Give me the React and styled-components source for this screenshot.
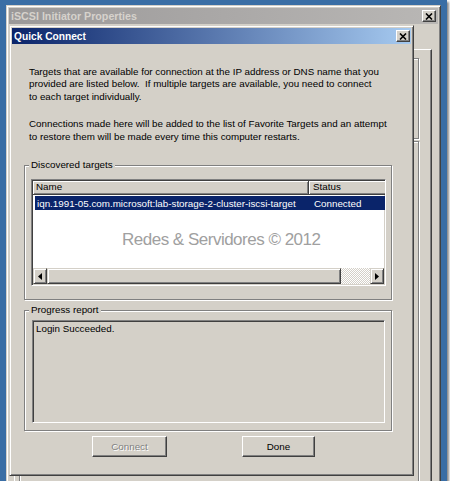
import React from 'react';
import styled, { createGlobalStyle } from 'styled-components';

const FACE = '#d4d0c8';

const GlobalStyle = createGlobalStyle`
  html, body {
    margin: 0;
    padding: 0;
    background: #fff;
  }
  body {
    font-family: "Liberation Sans", Arial, sans-serif;
    font-size: 9.8px;
    color: #000;
  }
`;

const Desktop = styled.div`
  position: relative;
  width: 447px;
  height: 481px;
  background: #3a6ea5;
  overflow: hidden;
  box-shadow: 2px 2px 2px rgba(0, 0, 0, 0.45);
`;

// windows sit on the desktop canvas, so they get coordinates
const Window = styled.div`
  position: absolute;
  left: ${p => p.$x}px;
  top: ${p => p.$y}px;
  width: ${p => p.$w}px;
  height: ${p => p.$h}px;
  box-sizing: border-box;
  display: flex;
  flex-direction: column;
  padding: 2px;
  background: ${FACE};
  border: 1px solid;
  border-color: ${FACE} #404040 #404040 ${FACE};
  box-shadow: inset 1px 1px #fff, inset -1px -1px #808080;
`;

const TitleBar = styled.div`
  flex: none;
  height: 16px;
  display: flex;
  align-items: center;
  padding: 0 ${p => (p.$active ? 1 : 2)}px 0 2px;
  background: ${p => (p.$active
    ? 'linear-gradient(to right, #0a246a, #a6caf0)'
    : 'linear-gradient(to right, #9b9999, #b9b7b5)')};
  color: ${p => (p.$active ? '#fff' : '#d6d2cc')};
  font-weight: bold;
  font-size: ${p => (p.$active ? 10.2 : 10.7)}px;
  white-space: nowrap;
`;

const TitleText = styled.span`
  flex: 1;
`;

const CaptionButton = styled.div`
  width: 14px;
  height: 12px;
  box-sizing: border-box;
  display: flex;
  align-items: center;
  justify-content: center;
  background: ${FACE};
  border: 1px solid;
  border-color: #fff #404040 #404040 #fff;
  box-shadow: inset -1px -1px #808080;
`;

const CloseGlyph = () => (
  <svg width="8" height="7" viewBox="0 0 8 7">
    <path d="M1 0.5 L7 6.5 M7 0.5 L1 6.5" stroke="#000" strokeWidth="1.6" />
  </svg>
);

/* ---- background window (iSCSI Initiator Properties) ---- */

const OuterBody = styled.div`
  flex: 1;
  display: flex;
  flex-direction: column;
  padding: 25px 6px 0 5px;
`;

const TabPanel = styled.div`
  flex: 1;
  display: flex;
  flex-direction: column;
  gap: 2px;
  padding: 8px 12px 0 4px;
  border: 1px solid;
  border-color: #fff #404040 #404040 #fff;
  box-shadow: inset -1px -1px #808080;
`;

const GroupBox = styled.div`
  position: relative;
  box-sizing: border-box;
  flex: ${p => (p.$grow ? 1 : 'none')};
  height: ${p => (p.$h ? `${p.$h}px` : 'auto')};
  margin-top: ${p => p.$mt || 0}px;
  padding: ${p => p.$pad || '0'};
  border: 1px solid #808080;
  box-shadow: 1px 1px 0 #fff, inset 1px 1px 0 #fff;
`;

const Legend = styled.span`
  position: absolute;
  left: 4px;
  top: -7px;
  padding: 0 2px;
  line-height: 12px;
  background: ${FACE};
`;

/* ---- Quick Connect dialog ---- */

const DialogBody = styled.div`
  flex: 1;
  display: flex;
  flex-direction: column;
  padding: 21.5px 19px 0 12px;
`;

const Para = styled.p`
  margin: ${p => p.$mt || 0}px 0 0 5px;
  line-height: 12.5px;
  white-space: nowrap;
`;

const Sunken = styled.div`
  box-sizing: border-box;
  height: ${p => p.$h}px;
  padding: 1px;
  display: flex;
  flex-direction: column;
  overflow: hidden;
  background: ${p => p.$bg || '#fff'};
  border: 1px solid;
  border-color: #808080 #fff #fff #808080;
  box-shadow: inset 1px 1px #404040, inset -1px -1px ${FACE};
`;

const HeaderRow = styled.div`
  flex: none;
  display: flex;
  height: 14px;
`;

const HeaderCell = styled.div`
  flex: none;
  box-sizing: border-box;
  width: ${p => p.$w}px;
  height: 14px;
  padding-left: ${p => p.$pl}px;
  line-height: 12px;
  background: ${FACE};
  border-right: 1px solid #404040;
  border-bottom: 1px solid #404040;
  box-shadow: inset 1px 1px #fff, inset -1px -1px #808080;
  white-space: nowrap;
`;

const ListArea = styled.div`
  flex: 1;
  background: #fff;
`;

const Row = styled.div`
  display: flex;
  align-items: center;
  height: 14px;
  margin: 1px 0 0 2px;
  width: 380px;
  background: ${p => (p.$selected ? '#0a246a' : 'transparent')};
  color: ${p => (p.$selected ? '#fff' : '#000')};
  white-space: nowrap;
`;

const Cell = styled.div`
  flex: none;
  box-sizing: border-box;
  width: ${p => p.$w}px;
  padding-left: ${p => p.$pl}px;
`;

const ScrollBar = styled.div`
  flex: none;
  display: flex;
  height: 16px;
`;

const Raised = styled.div`
  flex: none;
  box-sizing: border-box;
  width: ${p => p.$w}px;
  height: 16px;
  display: flex;
  align-items: center;
  justify-content: center;
  background: ${FACE};
  border: 1px solid;
  border-color: ${FACE} #404040 #404040 ${FACE};
  box-shadow: inset 1px 1px #fff, inset -1px -1px #808080;
`;

const Track = styled.div`
  flex: 1;
  background: repeating-conic-gradient(#fff 0 25%, ${FACE} 0 50%) 0 0 / 2px 2px;
`;

const Arrow = ({ dir }) => (
  <svg width="4" height="7" viewBox="0 0 4 7">
    <polygon points={dir === 'left' ? '4,0 0,3.5 4,7' : '0,0 4,3.5 0,7'} fill="#000" />
  </svg>
);

const LogText = styled.div`
  padding: 1px 2px;
  line-height: 12px;
`;

const ButtonRow = styled.div`
  display: flex;
  gap: 75px;
  margin-top: 5px;
  padding-left: 68px;
`;

const Button = styled.button`
  box-sizing: border-box;
  width: ${p => p.$w}px;
  height: 21px;
  padding: 0;
  font: inherit;
  background: ${FACE};
  color: ${p => (p.disabled ? '#808080' : '#000')};
  text-shadow: ${p => (p.disabled ? '1px 1px 0 #fff' : 'none')};
  border: 1px solid;
  border-color: #fff #404040 #404040 #fff;
  box-shadow: inset -1px -1px #808080;
`;

const Watermark = styled.div`
  position: absolute;
  left: 122px;
  top: 231px;
  font-size: 17px;
  line-height: 17px;
  letter-spacing: -0.5px;
  color: #a0a0a0;
  white-space: nowrap;
`;

export default function App() {
  return (
    <>
      <GlobalStyle />
      <Desktop>
        <Window $x={6} $y={5} $w={435} $h={490}>
          <TitleBar>
            <TitleText>iSCSI Initiator Properties</TitleText>
            <CaptionButton><CloseGlyph /></CaptionButton>
          </TitleBar>
          <OuterBody>
            <TabPanel>
              <GroupBox $h={81} />
              <GroupBox $grow />
            </TabPanel>
          </OuterBody>
        </Window>

        <Window $x={9} $y={25} $w={405} $h={451}>
          <TitleBar $active>
            <TitleText>Quick Connect</TitleText>
            <CaptionButton><CloseGlyph /></CaptionButton>
          </TitleBar>
          <DialogBody>
            <Para>
              Targets that are available for connection at the IP address or DNS name that you<br />
              provided are listed below.&nbsp; If multiple targets are available, you need to connect<br />
              to each target individually.
            </Para>
            <Para $mt={15}>
              Connections made here will be added to the list of Favorite Targets and an attempt<br />
              to restore them will be made every time this computer restarts.
            </Para>

            <GroupBox $h={135} $mt={22} $pad="13px 5px 0 6px">
              <Legend>Discovered targets</Legend>
              <Sunken $h={107}>
                <HeaderRow>
                  <HeaderCell $w={276} $pl={3}>Name</HeaderCell>
                  <HeaderCell $w={100} $pl={4}>Status</HeaderCell>
                </HeaderRow>
                <ListArea>
                  <Row $selected>
                    <Cell $w={274} $pl={2}>iqn.1991-05.com.microsoft:lab-storage-2-cluster-iscsi-target</Cell>
                    <Cell $w={100} $pl={5}>Connected</Cell>
                  </Row>
                </ListArea>
                <ScrollBar>
                  <Raised $w={14}><Arrow dir="left" /></Raised>
                  <Raised $w={294} />
                  <Track />
                  <Raised $w={14}><Arrow dir="right" /></Raised>
                </ScrollBar>
              </Sunken>
            </GroupBox>

            <GroupBox $h={121} $mt={10} $pad="9px 6px 0 7px">
              <Legend>Progress report</Legend>
              <Sunken $h={103} $bg={FACE}>
                <LogText>Login Succeeded.</LogText>
              </Sunken>
            </GroupBox>

            <ButtonRow>
              <Button $w={75} disabled>Connect</Button>
              <Button $w={73}>Done</Button>
            </ButtonRow>
          </DialogBody>
        </Window>

        <Watermark>Redes &amp; Servidores © 2012</Watermark>
      </Desktop>
    </>
  );
}
